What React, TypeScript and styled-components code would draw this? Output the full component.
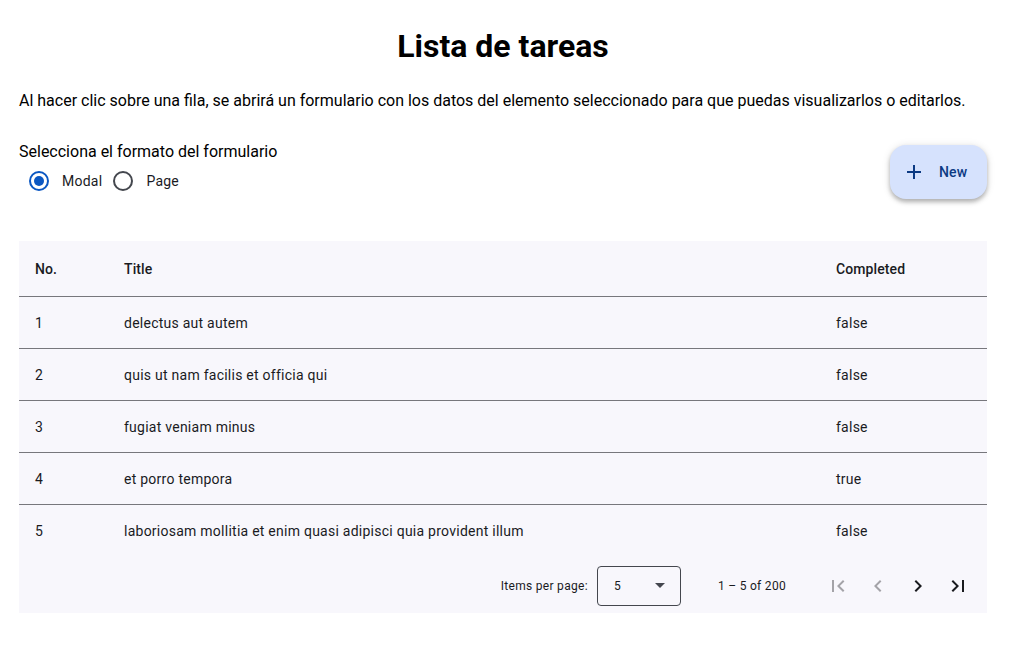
import React, { useState } from "react";
import styled, { createGlobalStyle } from "styled-components";

const Global = createGlobalStyle`
  html, body { margin: 0; padding: 0; background: #ffffff; }
  body { font-family: Roboto, "Noto Sans", Arial, sans-serif; color: #1a1b1f; }
  * { box-sizing: border-box; }
`;

const Page = styled.div`
  padding: 26px 27px 0 19px;
  width: 1014px;
`;

const Title = styled.h1`
  margin: 0;
  text-align: center;
  font-size: 32px;
  line-height: 40px;
  font-weight: 700;
  color: #000;
`;

const Intro = styled.p`
  margin: 23px 0 0;
  font-size: 16px;
  line-height: 24px;
  color: #000;
`;

const Controls = styled.div`
  display: flex;
  justify-content: space-between;
  align-items: flex-start;
  margin-top: 27px;
`;

const FormatGroup = styled.div`
  display: flex;
  flex-direction: column;
`;

const GroupLabel = styled.div`
  font-size: 16px;
  line-height: 24px;
  color: #000;
  margin-bottom: -3px;
`;

const RadioRow = styled.div`
  display: flex;
  align-items: center;
`;

const RadioOption = styled.label`
  display: flex;
  align-items: center;
  cursor: pointer;
  font-size: 14px;
  letter-spacing: 0.25px;
  color: #1a1b1f;
`;

const RadioTarget = styled.span`
  width: 40px;
  height: 40px;
  display: flex;
  align-items: center;
  justify-content: center;
`;

const RadioCircle = styled.span<{ $checked: boolean }>`
  width: 20px;
  height: 20px;
  border-radius: 50%;
  border: 2px solid ${(p) => (p.$checked ? "#0b57c2" : "#44474e")};
  display: flex;
  align-items: center;
  justify-content: center;
  &::after {
    content: "";
    width: 10px;
    height: 10px;
    border-radius: 50%;
    background: #0b57c2;
    display: ${(p) => (p.$checked ? "block" : "none")};
  }
`;

const RadioText = styled.span`
  padding: 0 1px 0 3px;
  line-height: 20px;
`;

const Fab = styled.button`
  margin-top: 5px;
  height: 54px;
  width: 97px;
  border: none;
  border-radius: 16px;
  background: #d6e2fd;
  color: #0c3a83;
  display: flex;
  align-items: center;
  padding: 0 0 0 12px;
  gap: 13px;
  font-family: Roboto, sans-serif;
  font-size: 14px;
  font-weight: 500;
  letter-spacing: 0.1px;
  box-shadow: 0 3px 4px rgba(0, 0, 0, 0.25), 0 1px 8px rgba(0, 0, 0, 0.12);
  cursor: pointer;
`;

const TableCard = styled.div`
  margin-top: 40px;
  background: #f8f7fc;
`;

const Table = styled.table`
  width: 100%;
  border-collapse: collapse;
  font-size: 14px;
`;

const HeadCell = styled.th<{ $w?: number }>`
  text-align: left;
  font-weight: 500;
  height: 55px;
  padding: 2px 16px 0;
  color: #1a1b1f;
  border-bottom: 1px solid #77777c;
  width: ${(p) => (p.$w ? `${p.$w}px` : "auto")};
  letter-spacing: 0.1px;
`;

const Cell = styled.td`
  height: 52px;
  padding: 2px 16px 0;
  color: #1a1b1f;
  letter-spacing: 0.25px;
`;

const Row = styled.tr`
  &:not(:last-child) td {
    border-bottom: 1px solid #77777c;
  }
`;

const Paginator = styled.div`
  height: 57px;
  display: flex;
  align-items: center;
  justify-content: flex-end;
  padding: 2px 9px 0 0;
  font-size: 12px;
  color: #1a1b1f;
`;

const PerPageLabel = styled.span`
  margin-right: 9px;
  letter-spacing: 0.3px;
`;

const Select = styled.div`
  width: 84px;
  height: 40px;
  border: 1px solid #44474e;
  border-radius: 4px;
  display: flex;
  align-items: center;
  justify-content: space-between;
  padding: 0 15px 0 16px;
  font-size: 12px;
`;

const Caret = styled.span`
  width: 0;
  height: 0;
  border-left: 5px solid transparent;
  border-right: 5px solid transparent;
  border-top: 5px solid #44474e;
`;

const RangeLabel = styled.span`
  margin: 0 32px 0 37px;
  letter-spacing: 0.3px;
`;

const NavButton = styled.button<{ $disabled?: boolean }>`
  width: 40px;
  height: 40px;
  border: none;
  background: transparent;
  display: flex;
  align-items: center;
  justify-content: center;
  padding: 0;
  color: ${(p) => (p.$disabled ? "rgba(26,27,31,0.38)" : "#1a1b1f")};
  cursor: ${(p) => (p.$disabled ? "default" : "pointer")};
`;

const rows = [
  { id: 1, title: "delectus aut autem", completed: "false" },
  { id: 2, title: "quis ut nam facilis et officia qui", completed: "false" },
  { id: 3, title: "fugiat veniam minus", completed: "false" },
  { id: 4, title: "et porro tempora", completed: "true" },
  { id: 5, title: "laboriosam mollitia et enim quasi adipisci quia provident illum", completed: "false" },
];

const Icon = ({ d }: { d: string }) => (
  <svg width="24" height="24" viewBox="0 0 24 24" fill="currentColor">
    <path d={d} />
  </svg>
);

export default function App() {
  const [mode, setMode] = useState("modal");
  return (
    <>
      <Global />
      <Page>
        <Title>Lista de tareas</Title>
        <Intro>
          Al hacer clic sobre una fila, se abrirá un formulario con los datos del elemento seleccionado para que puedas visualizarlos o editarlos.
        </Intro>
        <Controls>
          <FormatGroup>
            <GroupLabel>Selecciona el formato del formulario</GroupLabel>
            <RadioRow>
              <RadioOption onClick={() => setMode("modal")}>
                <RadioTarget>
                  <RadioCircle $checked={mode === "modal"} />
                </RadioTarget>
                <RadioText>Modal</RadioText>
              </RadioOption>
              <RadioOption onClick={() => setMode("page")}>
                <RadioTarget>
                  <RadioCircle $checked={mode === "page"} />
                </RadioTarget>
                <RadioText>Page</RadioText>
              </RadioOption>
            </RadioRow>
          </FormatGroup>
          <Fab>
            <Icon d="M19 13h-6v6h-2v-6H5v-2h6V5h2v6h6v2z" />
            New
          </Fab>
        </Controls>
        <TableCard>
          <Table>
            <thead>
              <tr>
                <HeadCell $w={89}>No.</HeadCell>
                <HeadCell>Title</HeadCell>
                <HeadCell $w={167}>Completed</HeadCell>
              </tr>
            </thead>
            <tbody>
              {rows.map((r) => (
                <Row key={r.id}>
                  <Cell>{r.id}</Cell>
                  <Cell>{r.title}</Cell>
                  <Cell>{r.completed}</Cell>
                </Row>
              ))}
            </tbody>
          </Table>
          <Paginator>
            <PerPageLabel>Items per page:</PerPageLabel>
            <Select>
              <span>5</span>
              <Caret />
            </Select>
            <RangeLabel>1 – 5 of 200</RangeLabel>
            <NavButton $disabled>
              <Icon d="M18.41 16.59L13.82 12l4.59-4.59L17 6l-6 6 6 6zM6 6h2v12H6z" />
            </NavButton>
            <NavButton $disabled>
              <Icon d="M15.41 7.41L14 6l-6 6 6 6 1.41-1.41L10.83 12z" />
            </NavButton>
            <NavButton>
              <Icon d="M10 6L8.59 7.41 13.17 12l-4.58 4.59L10 18l6-6z" />
            </NavButton>
            <NavButton>
              <Icon d="M5.59 7.41L10.18 12l-4.59 4.59L7 18l6-6-6-6zM16 6h2v12h-2z" />
            </NavButton>
          </Paginator>
        </TableCard>
      </Page>
    </>
  );
}
